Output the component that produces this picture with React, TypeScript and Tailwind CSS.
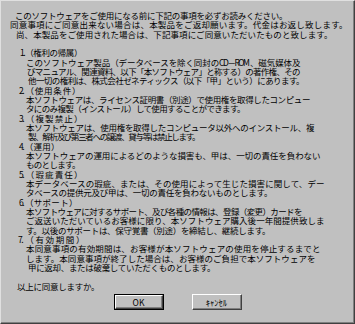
type Line = { text: string; cls: string };

// each line is stretched to the width it has in the dialog
const lines: Line[] = [
  { text: "このソフトウェアをご使用になる前に下記の事項を必ずお読みください。", cls: "ml-[14px] w-[271px]" },
  { text: "同意事項にご同意出来ない場合は、本製品をご返却願います。代金はお返し致します。", cls: "ml-[9px] w-[336px]" },
  { text: "尚、本製品をご使用された場合は、下記事項にご同意いただいたものと致します。", cls: "ml-[15px] w-[315px]" },
  { text: "", cls: "" },
  { text: "1.（権利の帰属）", cls: "ml-[19px] w-[61px]" },
  { text: "このソフトウェア製品（データベースを除く同封のCD－ROM、磁気媒体及", cls: "ml-[25px] w-[273px]" },
  { text: "びマニュアル、関連資料、以下「本ソフトウェア」と称する）の著作権、その", cls: "ml-[26px] w-[272px]" },
  { text: "他一切の権利は、株式会社ゼネティックス（以下「甲」という）にあります。", cls: "ml-[27px] w-[275px]" },
  { text: "2.（使用条件）", cls: "ml-[18px] w-[60px]" },
  { text: "本ソフトウェアは、ライセンス証明書（別途）で使用権を取得したコンピュー", cls: "ml-[25px] w-[283px]" },
  { text: "タにのみ複製（インストール）して使用することができます。", cls: "ml-[25px] w-[218px]" },
  { text: "3.（複製禁止）", cls: "ml-[18px] w-[62px]" },
  { text: "本ソフトウェアは、使用権を取得したコンピュータ以外へのインストール、複", cls: "ml-[25px] w-[287px]" },
  { text: "製、解析及び第三者への譲渡、貸与等は禁止します。", cls: "ml-[27px] w-[171px]" },
  { text: "4.（運用）", cls: "ml-[18px] w-[39px]" },
  { text: "本ソフトウェアの運用によるどのような損害も、甲は、一切の責任を負わない", cls: "ml-[25px] w-[293px]" },
  { text: "ものとします。", cls: "ml-[25px] w-[53px]" },
  { text: "5.（瑕疵責任）", cls: "ml-[18px] w-[62px]" },
  { text: "本データベースの瑕疵、または、その使用によって生じた損害に関して、デー", cls: "ml-[25px] w-[297px]" },
  { text: "タベースの提供元及び甲は、一切の責任を負わないものとします。", cls: "ml-[25px] w-[245px]" },
  { text: "6.（サポート）", cls: "ml-[18px] w-[57px]" },
  { text: "本ソフトウェアに対するサポート、及び各種の情報は、登録（変更）カードを", cls: "ml-[25px] w-[275px]" },
  { text: "ご返送いただいているお客様に限り、本ソフトウェア購入後一年間提供致しま", cls: "ml-[25px] w-[297px]" },
  { text: "す。以後のサポートは、保守覚書（別途）を締結し、継続します。", cls: "ml-[25px] w-[243px]" },
  { text: "7.（有効期間）", cls: "ml-[17px] w-[65px]" },
  { text: "本同意事項の有効期間は、お客様が本ソフトウェアの使用を停止するまでと", cls: "ml-[25px] w-[293px]" },
  { text: "します。本同意事項が終了した場合は、お客様のご負担で本ソフトウェアを", cls: "ml-[25px] w-[288px]" },
  { text: "甲に返却、または破棄していただくものとします。", cls: "ml-[27px] w-[186px]" },
  { text: "", cls: "" },
  { text: "以上に同意しますか。", cls: "ml-[16px] w-[81px]" },
];

function Win95Button({ label, isDefault }: { label: string; isDefault?: boolean }) {
  return (
    <button
      type="button"
      className={
        "w-[50px] h-[16px] p-0 bg-[#c0c0c0] " +
        (isDefault ? "border border-black" : "border-0")
      }
    >
      <div className="w-full h-full border-t border-l border-t-white border-l-white border-b border-r border-b-[#404040] border-r-[#404040] shadow-[inset_-1px_-1px_0_#808080] flex items-center justify-center text-[8.5px] leading-none text-black">
        {label}
      </div>
    </button>
  );
}

export default function App() {
  return (
    <div
      className="w-[355px] h-[324px] bg-[#c0c0c0] border-t border-l border-t-[#e0e0e0] border-l-[#e0e0e0] border-b border-r border-b-[#404040] border-r-[#404040] shadow-[inset_-1px_-1px_0_#808080] text-black overflow-hidden"
      style={{ fontFamily: '"Noto Sans CJK JP", "MS UI Gothic", sans-serif' }}
    >
      <div className="pt-[10px] text-[8.5px] leading-[9.34px] tracking-[-1.5px]">
        {lines.map((l, i) => (
          <div
            key={i}
            className={"whitespace-nowrap h-[9.34px] text-justify [text-align-last:justify] " + l.cls}
          >
            {l.text}
          </div>
        ))}
      </div>
      <div className="flex justify-center gap-[28px] mt-[3px]">
        <Win95Button label="OK" isDefault />
        <Win95Button label="ｷｬﾝｾﾙ" />
      </div>
    </div>
  );
}
